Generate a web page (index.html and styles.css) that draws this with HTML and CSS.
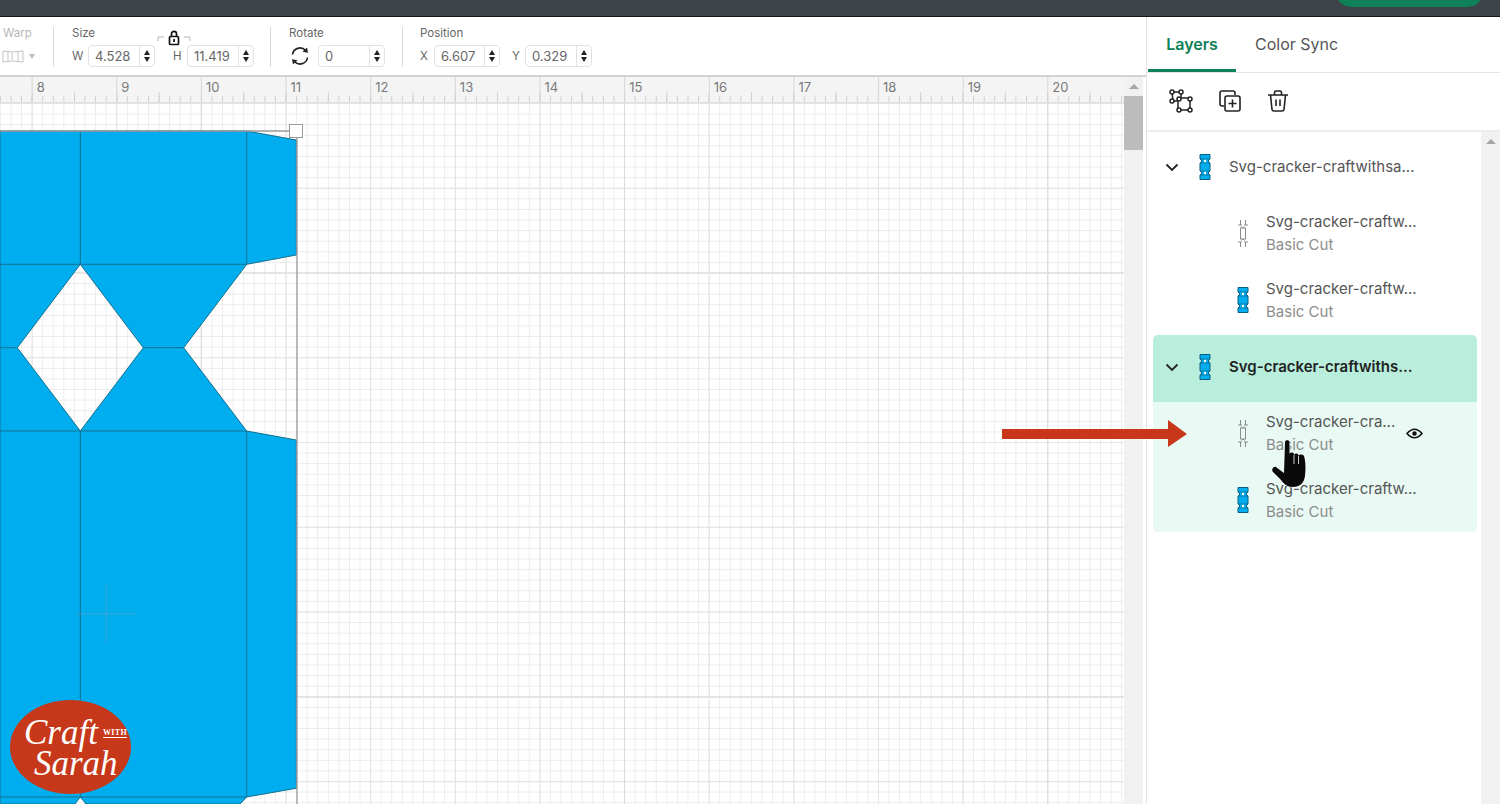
FILE: index.html
```html
<!DOCTYPE html>
<html lang="en">
<head>
<meta charset="utf-8">
<title>Design Space layers</title>
<link rel="stylesheet" href="styles.css">
</head>
<body>
<svg class="defs" width="0" height="0" aria-hidden="true">
  <symbol id="cracker" viewBox="0 0 12 26">
    <polygon points="1,.5 11,.5 11,5 9,7 11,9 11,17 9,19 11,21 11,25.5 1,25.5 1,21 3,19 1,17 1,9 3,7 1,5" fill="#00aeef" stroke="#0b5f80" stroke-width="1"/>
    <path d="M1 5H11M1 21H11M1 9H11M1 17H11" stroke="#0b5f80" stroke-width=".7"/>
    <path d="M6 5.2L7.4 7L6 8.8L4.6 7ZM6 17.2L7.4 19L6 20.8L4.6 19Z" fill="#fff"/>
  </symbol>
  <symbol id="outline" viewBox="0 0 12 27">
    <path d="M3.5 0V5M8.5 0V5M1 5H5M7 5H11M3 8H9M3.5 8V19M8.5 8V19M3 19H9M1 22H5M7 22H11M3.5 22V27M8.5 22V27M4.5 20.5L6 19L7.5 20.5M4.5 6.5L6 8L7.5 6.5" fill="none" stroke="#8c8c8c" stroke-width="1"/>
  </symbol>
  <symbol id="chevron" viewBox="0 0 14 9">
    <path d="M1.5 1.5L7 7L12.5 1.5" fill="none" stroke="#222" stroke-width="1.8"/>
  </symbol>
</svg>

<div class="app">
  <header class="topbar"><div class="topbar-btn"></div></header>

  <div class="main">
    <section class="workspace">
      <div class="toolbar">
        <div class="tool-group warp">
          <span class="tool-label muted">Warp</span>
          <div class="tool-row">
            <svg class="warp-icon" width="22" height="13" viewBox="0 0 22 13"><path d="M1 1Q11 3 21 1V12Q11 10 1 12ZM6 2V11M16 2V11M10 2.500V10.500" fill="none" stroke="#c4c4c4" stroke-width="1"/></svg>
            <span class="warp-caret"></span>
          </div>
        </div>
        <div class="sep"></div>
        <div class="tool-group size">
          <span class="tool-label">Size</span>
          <div class="tool-row">
            <span class="axis ax-w">W</span>
            <div class="num"><span class="num-val">4.528</span><span class="stepper"><i class="up"></i><i class="down"></i></span></div>
            <span class="axis ax-h">H</span>
            <div class="num"><span class="num-val">11.419</span><span class="stepper"><i class="up"></i><i class="down"></i></span></div>
          </div>
          <svg class="lock" width="34" height="16" viewBox="0 0 34 16">
            <path d="M1 11V7H7M27 7H33V11" fill="none" stroke="#b5b5b5" stroke-width="1"/>
            <rect x="12.500" y="6.500" width="9" height="8" rx="1" fill="#fff" stroke="#111" stroke-width="1.700"/>
            <path d="M14.500 6V3.800a2.500 2.500 0 0 1 5 0V6" fill="none" stroke="#111" stroke-width="1.700"/>
            <rect x="16.200" y="9" width="1.700" height="3" fill="#111"/>
          </svg>
        </div>
        <div class="sep"></div>
        <div class="tool-group rotate">
          <span class="tool-label">Rotate</span>
          <div class="tool-row">
            <svg class="rotate-icon" width="20" height="20" viewBox="0 0 20 20">
              <path d="M2.500 8.500A7.500 7.500 0 0 1 15.500 4.500M17.500 11.500A7.500 7.500 0 0 1 4.500 15.500" fill="none" stroke="#222" stroke-width="1.700"/>
              <path d="M12.500 5.800L18 6.800L17 1.500ZM7.500 14.200L2 13.200L3 18.500Z" fill="#222"/>
            </svg>
            <div class="num"><span class="num-val">0</span><span class="stepper"><i class="up"></i><i class="down"></i></span></div>
          </div>
        </div>
        <div class="sep"></div>
        <div class="tool-group position">
          <span class="tool-label">Position</span>
          <div class="tool-row">
            <span class="axis ax-x">X</span>
            <div class="num narrow"><span class="num-val">6.607</span><span class="stepper"><i class="up"></i><i class="down"></i></span></div>
            <span class="axis ax-y">Y</span>
            <div class="num"><span class="num-val">0.329</span><span class="stepper"><i class="up"></i><i class="down"></i></span></div>
          </div>
        </div>
      </div>

      <div class="stage">
        <div class="canvas">
          <div class="ruler">
            <span>8</span><span>9</span><span>10</span><span>11</span><span>12</span><span>13</span><span>14</span><span>15</span><span>16</span><span>17</span><span>18</span><span>19</span><span>20</span>
          </div>
          <div class="grid">
            <svg class="cut-shape" width="310" height="701" viewBox="0 103 310 701">
              <path fill="#00aeef" fill-rule="evenodd" stroke="#14708f" stroke-width="1" d="M0 131H246.700L296.300 140V255L246.700 264.300L183.700 347.700L246.700 431L296.300 440V788.300L246.700 797L240 804H86L80.300 797L75 804H0ZM80.300 264.300L143.300 347.700L80.300 431L17.300 347.700Z"/>
              <path fill="none" stroke="#14708f" stroke-width="1" d="M80.300 131V264.300M80.300 431V797M246.700 131V264.300M246.700 431V797M0 264.300H246.700M0 431H246.700M0 797H246.700M0 347.700H17.300M143.300 347.700H183.700"/>
              <path fill="none" stroke="#9a9a9a" stroke-width="1.300" d="M0 131H289.500M297 137.500V804"/>
              <rect x="289.500" y="124.500" width="13" height="13" fill="#fff" stroke="#9a9a9a" stroke-width="1"/>
              <path fill="none" stroke="#8a9aa3" stroke-width="1" opacity=".45" d="M106 584V642M76 614H136"/>
            </svg>
            <div class="logo">
              <div class="logo-top"><span class="logo-craft">Craft</span><span class="logo-with">WITH</span></div>
              <span class="logo-sarah">Sarah</span>
            </div>
          </div>
        </div>
        <div class="vscroll"><i class="sb-up"></i><div class="thumb"></div></div>
      </div>
    </section>

    <aside class="panel">
      <nav class="tabs">
        <span class="tab active">Layers</span>
        <span class="tab">Color Sync</span>
      </nav>
      <div class="actions">
        <svg class="act-group" width="24" height="24" viewBox="0 0 24 24" fill="none" stroke="#222" stroke-width="1.500">
          <path d="M3 3H12M3 3L4 12M12 3V8M4 12H8M9 9H21V21H9Z"/>
          <g fill="#fff">
            <circle cx="3" cy="3" r="2"/><circle cx="12" cy="3" r="2"/><circle cx="3" cy="12" r="2"/>
            <circle cx="10" cy="10" r="2"/><circle cx="21" cy="10" r="2"/><circle cx="10" cy="21" r="2"/><circle cx="21" cy="21" r="2"/>
          </g>
        </svg>
        <svg class="act-dup" width="22" height="22" viewBox="0 0 22 22" fill="none" stroke="#222" stroke-width="1.600">
          <path d="M5 16H3a2 2 0 0 1-2-2V3a2 2 0 0 1 2-2H14a2 2 0 0 1 2 2V5"/>
          <rect x="6" y="6" width="15" height="15" rx="2"/>
          <path d="M13.500 9.500V17.500M9.500 13.500H17.500"/>
        </svg>
        <svg class="act-trash" width="22" height="22" viewBox="0 0 22 22" fill="none" stroke="#222" stroke-width="1.600">
          <path d="M1 5H21M7.500 5V2.500Q7.500 1 9 1H13Q14.500 1 14.500 2.500V5M3.500 5L5 19.500Q5.200 21 7 21H15Q16.800 21 17 19.500L18.500 5M9 9.500V16M13 9.500V16"/>
        </svg>
      </div>
      <div class="list-wrap">
        <div class="list">
          <div class="layer-head">
            <svg class="chev" width="14" height="9"><use href="#chevron"/></svg>
            <svg class="thumb-icon" width="12" height="26"><use href="#cracker"/></svg>
            <span class="layer-title">Svg-cracker-craftwithsa...</span>
          </div>
          <div class="kids">
            <div class="kid">
              <svg class="thumb-icon" width="12" height="27"><use href="#outline"/></svg>
              <div class="kid-text"><span class="layer-title">Svg-cracker-craftw...</span><span class="layer-sub">Basic Cut</span></div>
            </div>
            <div class="kid">
              <svg class="thumb-icon" width="12" height="26"><use href="#cracker"/></svg>
              <div class="kid-text"><span class="layer-title">Svg-cracker-craftw...</span><span class="layer-sub">Basic Cut</span></div>
            </div>
          </div>
          <div class="selected">
            <div class="layer-head sel-head">
              <svg class="chev" width="14" height="9"><use href="#chevron"/></svg>
              <svg class="thumb-icon" width="12" height="26"><use href="#cracker"/></svg>
              <span class="layer-title strong">Svg-cracker-craftwiths...</span>
            </div>
            <div class="kids sel-kids">
              <div class="kid">
                <svg class="thumb-icon" width="12" height="27"><use href="#outline"/></svg>
                <div class="kid-text"><span class="layer-title">Svg-cracker-cra...</span><span class="layer-sub">Basic Cut</span></div>
                <svg class="eye" width="17" height="11" viewBox="0 0 17 11" fill="none" stroke="#111" stroke-width="1.600">
                  <path d="M1 5.500Q8.500 -3 16 5.500Q8.500 14 1 5.500Z"/><circle cx="8.500" cy="5.500" r="1.500" fill="#111"/>
                </svg>
              </div>
              <div class="kid">
                <svg class="thumb-icon" width="12" height="26"><use href="#cracker"/></svg>
                <div class="kid-text"><span class="layer-title">Svg-cracker-craftw...</span><span class="layer-sub">Basic Cut</span></div>
              </div>
            </div>
          </div>
        </div>
        <div class="list-scroll"><i class="sb-up"></i></div>
      </div>
    </aside>
  </div>

  <svg class="red-arrow" width="186" height="28" viewBox="0 0 186 28">
    <path d="M0 9H166V0L185 14L166 27V19H0Z" fill="#c8371a"/>
  </svg>
  <svg class="hand" width="40" height="52" viewBox="0 0 40 52">
    <path d="M15 4C15 1.500 19.500 1.500 19.500 4V16C20 14 23.500 14 24 16V17C24.500 15 28 15 28.500 17V18C29 16 33 16 34 18C35.500 22 36 30 35 38C34 45 30 49 23 49C17 49 14 46 11 42L3 34C1 32 3 28 6 29L14 35Z" fill="#0a0a0a" stroke="#fff" stroke-opacity=".8" stroke-width="1.500" paint-order="stroke"/>
    <path d="M24 17V26M28.500 18V26" stroke="#fff" stroke-width=".8"/>
  </svg>
</div>
</body>
</html>
```

FILE: styles.css
```css
* { box-sizing: border-box; }
html, body { margin: 0; padding: 0; }
body {
  width: 1500px;
  height: 804px;
  overflow: hidden;
  background: #fff;
  font-family: Inter, "Liberation Sans", sans-serif;
  color: #555;
}
.defs { position: absolute; }
.app {
  position: relative;
  width: 1500px;
  height: 804px;
  display: flex;
  flex-direction: column;
  overflow: hidden;
}

/* top bar */
.topbar {
  flex: 0 0 17px;
  background: #3e4249;
  border-bottom: 1px solid #15171a;
  display: flex;
  justify-content: flex-end;
  align-items: flex-end;
  padding: 0 17px 9px 0;
  overflow: hidden;
}
.topbar-btn {
  flex: none;
  width: 147px;
  height: 30px;
  border-radius: 15px;
  background: #0e8158;
}

.main { flex: 1; display: flex; min-height: 0; }
.workspace {
  flex: 0 0 1146px;
  display: flex;
  flex-direction: column;
  min-width: 0;
}

/* toolbar */
.toolbar {
  flex: 0 0 58px;
  display: flex;
  align-items: flex-start;
  padding-left: 3px;
  background: #fff;
}
.tool-group {
  position: relative;
  padding-top: 9px;
  display: flex;
  flex-direction: column;
  gap: 5px;
}
.tool-label { font-size: 11.500px; line-height: 14px; color: #666; }
.tool-label.muted { color: #b5b5b5; }
.tool-row { display: flex; align-items: center; height: 22px; }
.warp { width: 50px; }
.warp-icon { margin-left: -1px; }
.warp-caret {
  margin-left: 5px;
  border-left: 3.500px solid transparent;
  border-right: 3.500px solid transparent;
  border-top: 5px solid #bdbdbd;
}
.sep { flex: none; width: 1px; height: 40px; margin-top: 10px; background: #d9d9d9; }
.size { margin: 0 16px 0 18px; }
.rotate { margin: 0 17px 0 18px; }
.position { margin-left: 17px; }
.axis { font-size: 11.500px; color: #666; }
.ax-w { width: 16px; }
.ax-h { width: 14px; margin-left: 18px; }
.ax-x { width: 14px; }
.ax-y { width: 13px; margin-left: 12px; }
.rotate-icon { margin: 0 8px 0 1px; }
.num {
  width: 67px;
  height: 22px;
  display: flex;
  align-items: center;
  border: 1px solid #e2e2e2;
  border-radius: 4px;
  background: #fff;
}
.num.narrow { width: 66px; }
.num-val { flex: 1; padding-left: 6px; font-size: 13px; color: #666; }
.stepper {
  flex: 0 0 15px;
  height: 20px;
  display: flex;
  flex-direction: column;
  align-items: center;
  justify-content: center;
  gap: 2px;
  border-left: 1px solid #e2e2e2;
}
.stepper i, .sb-up { display: block; width: 0; height: 0; border-left: 3.500px solid transparent; border-right: 3.500px solid transparent; }
.stepper .up { border-bottom: 5px solid #222; }
.stepper .down { border-top: 5px solid #222; }
.lock { position: absolute; left: 85px; top: 13px; }

/* canvas */
.stage {
  flex: 1;
  display: flex;
  min-height: 0;
  border-top: 2px solid #d2d2d2;
}
.canvas {
  flex: 0 0 1124px;
  display: flex;
  flex-direction: column;
  min-width: 0;
  overflow: hidden;
}
.ruler {
  flex: 0 0 26px;
  display: flex;
  padding-left: 31.650px;
  background-color: #f4f4f4;
  background-image:
    linear-gradient(to right, #d6d6d6 1px, transparent 1px),
    linear-gradient(to right, #cfcfcf 1px, transparent 1px),
    linear-gradient(to right, #cfcfcf 1px, transparent 1px);
  background-size: 84.650px 100%, 42.325px 10px, 10.581px 6px;
  background-position: 31.650px 0, 31.650px 100%, 31.650px 100%;
  background-repeat: repeat-x;
  border-bottom: 1px solid #dedede;
}
.ruler span {
  flex: 0 0 84.650px;
  padding: 2px 0 0 5px;
  font-size: 13px;
  line-height: 16px;
  color: #7a7a7a;
}
.grid {
  position: relative;
  flex: 1;
  background-color: #fff;
  background-image:
    linear-gradient(to right, #dcdcdc 1px, transparent 1px),
    linear-gradient(to bottom, #dcdcdc 1.500px, transparent 1.500px),
    linear-gradient(to right, #e4e4e4 1px, transparent 1px),
    linear-gradient(to bottom, #e4e4e4 1px, transparent 1px),
    linear-gradient(to right, #ececec 1px, transparent 1px),
    linear-gradient(to bottom, #ececec 1px, transparent 1px);
  background-size:
    423.250px 100%, 100% 424px,
    84.650px 100%, 100% 84.800px,
    10.581px 100%, 100% 10.600px;
  background-position:
    200.750px 0, 0 169.500px,
    31.650px 0, 0 84.700px,
    10.480px 0, 0 0;
}
.cut-shape { position: absolute; left: 0; top: 0; }
.logo {
  position: absolute;
  left: 10px;
  top: 597px;
  width: 121px;
  height: 94px;
  border-radius: 50%;
  background: #c7381a;
  color: #fff;
  font-family: "Liberation Serif", serif;
  display: flex;
  flex-direction: column;
  padding: 15px 0 0 14px;
}
.logo-top { display: flex; align-items: center; height: 36px; }
.logo-craft { font-size: 35px; font-style: italic; line-height: 36px; }
.logo-with { margin: 0 0 0 5px; font-size: 8px; font-weight: 700; letter-spacing: .4px; border-bottom: 1px solid #fff; }
.logo-sarah { margin: -5px 0 0 10px; font-size: 35px; font-style: italic; line-height: 36px; }

.vscroll {
  flex: 0 0 19px;
  background: #f1f1f1;
  display: flex;
  flex-direction: column;
  align-items: center;
}
.sb-up { border-bottom: 5px solid #a6a6a6; border-left-width: 5px; border-right-width: 5px; margin-top: 7px; }
.thumb { align-self: stretch; height: 54px; margin-top: 7px; background: #bcbcbc; }

/* right panel */
.panel {
  flex: 1;
  display: flex;
  flex-direction: column;
  min-width: 0;
  border-left: 1px solid #e2e2e2;
  background: #fff;
}
.tabs {
  flex: 0 0 56px;
  display: flex;
  padding-left: 1px;
  border-bottom: 1px solid #e4e4e4;
}
.tab {
  display: flex;
  align-items: flex-end;
  padding-bottom: 18px;
  font-size: 16px;
  line-height: 20px;
  color: #555;
}
.tab:last-child { margin-left: 19px; }
.tab.active {
  width: 88px;
  justify-content: center;
  font-weight: 600;
  color: #0e8158;
  border-bottom: 3px solid #0e8158;
  padding-bottom: 15px;
}
.actions {
  flex: 0 0 59px;
  display: flex;
  align-items: center;
  padding: 0 0 2px 22px;
  border-bottom: 2px solid #eee;
}
.act-dup { margin-left: 26px; }
.act-trash { margin-left: 26px; }
.list-wrap { flex: 1; display: flex; min-height: 0; }
.list { flex: 1; padding: 4px 4px 0 6px; }
.list-scroll {
  flex: 0 0 19px;
  background: #f1f1f1;
  display: flex;
  flex-direction: column;
  align-items: center;
}
.layer-head {
  height: 62px;
  display: flex;
  align-items: center;
  padding-left: 12px;
}
.chev { flex: none; margin-right: 20px; }
.thumb-icon { flex: none; }
.layer-head .layer-title { margin-left: 18px; }
.layer-title { font-size: 15px; line-height: 23.500px; color: #555; white-space: nowrap; }
.layer-title.strong { font-weight: 600; color: #222; }
.layer-sub { font-size: 15px; line-height: 23.500px; color: #8c8c8c; }
.kids { display: flex; flex-direction: column; gap: 5px; margin: 4px 0; }
.kid {
  height: 62px;
  display: flex;
  align-items: center;
  padding-left: 84px;
}
.kid-text { display: flex; flex-direction: column; margin-left: 17px; }
.eye { flex: none; margin-left: 11px; }
.selected { border-radius: 5px; overflow: hidden; }
.sel-head { height: 67px; padding-bottom: 3px; background: #b8eedb; }
.sel-kids { margin: 0; padding-bottom: 1px; background: #e9f9f3; }

/* overlays */
.red-arrow { position: absolute; left: 1002px; top: 420px; }
.hand { position: absolute; left: 1270px; top: 438px; }
```
